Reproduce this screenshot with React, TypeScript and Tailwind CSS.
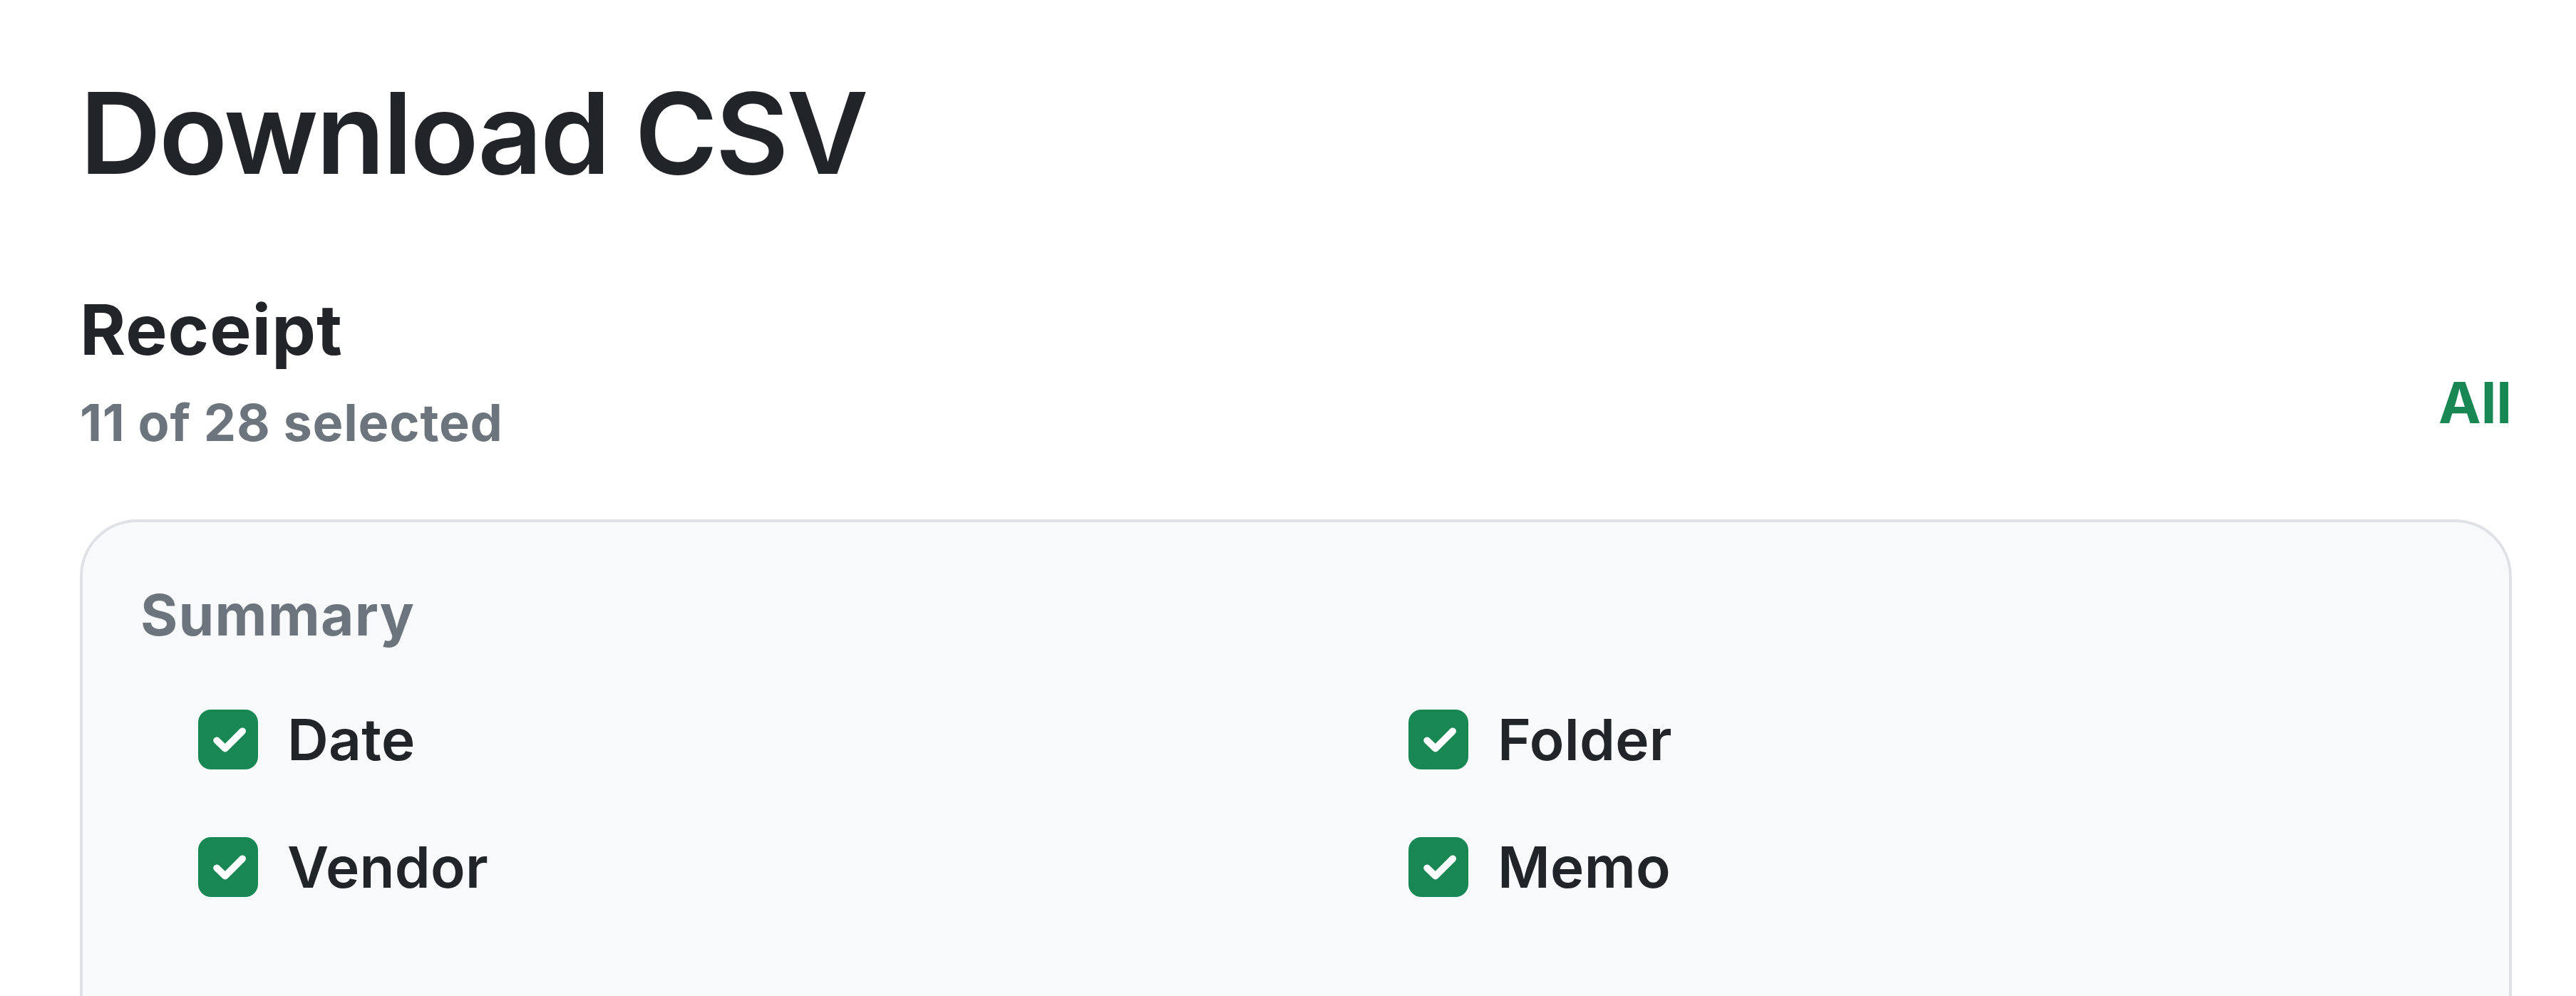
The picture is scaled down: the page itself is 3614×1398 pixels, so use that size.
import React from "react";

function Check() {
  return (
    <span className="flex h-[84px] w-[84px] shrink-0 items-center justify-center rounded-[18px] bg-[#198754]">
      <svg viewBox="0 0 20 20" className="h-[84px] w-[84px]">
        <path
          d="M6.2 10.3 9 13l5.8-5.8"
          fill="none"
          stroke="#fff"
          strokeWidth="2.3"
          strokeLinecap="round"
          strokeLinejoin="round"
        />
      </svg>
    </span>
  );
}

function Item({ label }: { label: string }) {
  return (
    <label className="flex h-[96px] items-center gap-[41px]">
      <Check />
      <span className="text-[80px] font-semibold leading-[96px] tracking-[0.3px] text-[#212529]">{label}</span>
    </label>
  );
}

export default function App() {
  return (
    <div
      className="min-h-screen bg-white pl-[112px] pr-[90px] pt-[92px]"
      style={{ fontFamily: "Inter, 'Noto Sans', sans-serif" }}
    >
      <h1 className="text-[158px] font-semibold leading-[190px] tracking-[-3px] text-[#212529]">
        Download CSV
      </h1>
      <div className="mt-[122px] flex items-end justify-between">
        <div>
          <h2 className="text-[98px] font-bold leading-[118px] tracking-[1px] text-[#212529]">Receipt</h2>
          <p className="mt-[28px] text-[72px] font-bold leading-[86px] tracking-[0.8px] text-[#6c757d]">
            11 of 28 selected
          </p>
        </div>
        <button className="mb-[23px] text-[80px] font-bold leading-[96px] text-[#198754]">All</button>
      </div>
      <div className="mt-[93px] min-h-[900px] rounded-[80px] border-[4px] border-[#dee2e6] bg-[#f8f9fa] pl-[81px] pr-[81px] pt-[82px]">
        <h3 className="text-[80px] font-bold leading-[96px] tracking-[1.2px] text-[#6c757d]">Summary</h3>
        <div className="mt-[79px] grid grid-cols-[1698px_1fr] gap-y-[83px] pl-[81px]">
          <Item label="Date" />
          <Item label="Folder" />
          <Item label="Vendor" />
          <Item label="Memo" />
        </div>
      </div>
    </div>
  );
}
